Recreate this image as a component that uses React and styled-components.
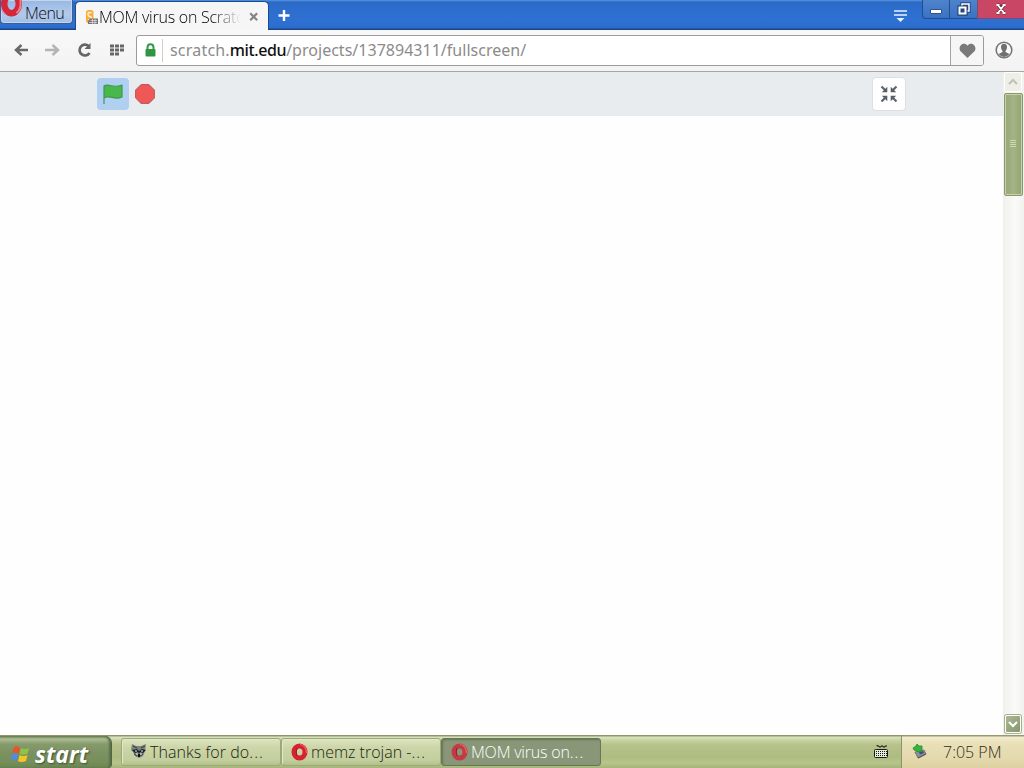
import React from 'react';
import styled, { createGlobalStyle } from 'styled-components';

const GlobalStyle = createGlobalStyle`
  * {
    box-sizing: border-box;
  }

  body {
    margin: 0;
    overflow: hidden;
    font-family: 'Open Sans', 'Noto Sans', sans-serif;
    background: #fff;
  }

  svg {
    display: block;
    flex-shrink: 0;
  }

  button {
    font-family: inherit;
    padding: 0;
    margin: 0;
  }
`;

const Screen = styled.div`
  width: 1024px;
  height: 768px;
  display: flex;
  flex-direction: column;
  overflow: hidden;
`;

const TitleBar = styled.header`
  height: 30px;
  display: flex;
  align-items: flex-start;
  background: linear-gradient(#5796e4 0, #2c69c4 2px, #2c6dce 10px, #2f71d2 20px, #2b6ccc 28px, #1c4486 29px);
`;

const MenuButton = styled.button`
  width: 73px;
  height: 24px;
  display: flex;
  align-items: flex-start;
  border: 1px solid #3c5f97;
  border-top: none;
  border-radius: 0 0 4px 4px;
  background: linear-gradient(#96b7e4, #b3c9e8 60%, #a3bfe6);
  box-shadow: inset 0 0 0 1px #c3d5ee;
  overflow: hidden;
`;

const MenuText = styled.span`
  font-size: 16px;
  font-weight: 300;
  line-height: 26px;
  letter-spacing: -0.6px;
  color: #050d1c;
  margin-left: 2px;
`;

const Tab = styled.div`
  width: 194px;
  height: 29px;
  margin: 1px 0 0 2px;
  padding: 1px 9px 0 9px;
  display: flex;
  align-items: center;
  border: 1px solid #1c4a91;
  border-bottom: none;
  border-radius: 5px 5px 0 0;
  background: #f6f6f6;
`;

const TabTitle = styled.span`
  width: 142px;
  margin: 0 auto 0 1px;
  overflow: hidden;
  white-space: nowrap;
  font-size: 16px;
  font-weight: 300;
  line-height: 26px;
  letter-spacing: -0.25px;
  color: #000;
  mask-image: linear-gradient(90deg, #000 112px, transparent 142px);
`;

const NewTab = styled.div`
  margin: 10px 0 0 9px;
`;

const WindowControls = styled.div`
  display: flex;
  align-items: flex-start;
  margin-left: auto;
`;

const TabMenu = styled.div`
  margin: 10px 15px 0 0;
`;

const WindowButton = styled.button`
  width: ${props => props.wide ? '47px' : props.first ? '27px' : '28px'};
  height: 19px;
  display: flex;
  align-items: center;
  justify-content: center;
  border: 1px solid ${props => props.close ? '#7c4a78' : '#234d91'};
  border-width: 0 0 1px 1px;
  border-bottom-left-radius: ${props => props.first ? '4px' : '0'};
  background: ${props => props.close ? '#c94764' : 'linear-gradient(#4f84cc, #3a72c2)'};
`;

const Toolbar = styled.div`
  height: 42px;
  display: flex;
  align-items: center;
  padding: 0 11px 1px 13px;
  background: linear-gradient(#f8f8f8, #f3f3f3);
  border-bottom: 1px solid #a3a6a7;
`;

const NavIcons = styled.div`
  width: 123px;
  display: flex;
  gap: 14px;
`;

const AddressBar = styled.div`
  width: 848px;
  height: 31px;
  display: flex;
  align-items: center;
  border: 1px solid #9b9b9b;
  border-radius: 3px;
  background: #fff;
  overflow: hidden;
`;

const LockBox = styled.div`
  width: 26px;
  height: 23px;
  padding-left: 8px;
  display: flex;
  align-items: center;
  border-right: 1px solid #cecece;
`;

const Url = styled.div`
  flex: 1;
  padding-left: 7px;
  font-family: 'Noto Sans', sans-serif;
  font-size: 16px;
  line-height: 26px;
  letter-spacing: 0.02px;
  white-space: nowrap;
  color: #8b8b8b;
`;

const Host = styled.span`
  letter-spacing: 0.2px;
`;

const Domain = styled.span`
  color: #111;
  font-weight: 500;
  letter-spacing: -0.4px;
`;

const HeartButton = styled.button`
  width: 33px;
  height: 29px;
  display: flex;
  align-items: center;
  justify-content: center;
  border: none;
  border-left: 1px solid #a3a3a3;
  background: #f6f6f6;
`;

const Profile = styled.div`
  margin-left: 11px;
`;

const Viewport = styled.main`
  flex: 1;
  min-height: 0;
  display: flex;
`;

const Page = styled.div`
  flex: 1;
  background: #fefefe;
`;

const StageHeader = styled.div`
  height: 44px;
  display: flex;
  align-items: center;
  justify-content: space-between;
  padding: 0 97px;
  background: #e8ecef;
`;

const StageControls = styled.div`
  display: flex;
  align-items: center;
  gap: 6px;
`;

const FlagButton = styled.button`
  width: 32px;
  height: 32px;
  display: flex;
  align-items: center;
  justify-content: center;
  border: none;
  border-radius: 4px;
  background: #b0d0f1;
`;

const ShrinkButton = styled.button`
  width: 34px;
  height: 34px;
  display: flex;
  align-items: center;
  justify-content: center;
  border: 1px solid #dcdfe3;
  border-radius: 4px;
  background: #fff;
`;

const Scrollbar = styled.aside`
  width: 21px;
  padding-right: 1px;
  display: flex;
  flex-direction: column;
  align-items: center;
  background: linear-gradient(90deg, #f0f0eb, #fafaf8 60%, #f1f1ed);
`;

const ArrowBox = styled.div`
  width: ${props => props.active ? '16px' : '18px'};
  height: ${props => props.active ? '18px' : '20px'};
  display: flex;
  align-items: center;
  justify-content: center;
  border: 1px solid #fff;
  border-radius: 2px;
  background: ${props => props.active ? 'linear-gradient(135deg, #adb893, #869571)' : '#efefe8'};
  box-shadow: 0 0 0 ${props => props.active ? '1px #a5b18b' : '0 transparent'};
  margin: ${props => props.active ? 'auto 0 2px' : '0 0 1px'};
`;

const Thumb = styled.div`
  width: 19px;
  height: 103px;
  padding-bottom: 3px;
  display: flex;
  flex-direction: column;
  align-items: center;
  justify-content: center;
  gap: 1px;
  border: 1px solid #899969;
  border-radius: 2px;
  background: linear-gradient(90deg, #97a777, #a4b485 50%, #93a471);
  box-shadow: inset 0 0 0 1px #c6d1ad;
`;

const Grip = styled.div`
  width: 6px;
  height: 1px;
  background: #ccd7b5;
`;

const Taskbar = styled.footer`
  height: 33px;
  display: flex;
  align-items: stretch;
  background: linear-gradient(#87976b 0, #8b9b6e 1px, #dce4c0 2px, #c9d4a3 5px, #b5c28a 10px, #aebc82 22px, #b7c58c 28px, #a5b479 33px);
`;

const StartButton = styled.button`
  width: 112px;
  margin: 1px 9px 0 0;
  padding: 4px 0 0 11px;
  display: flex;
  align-items: center;
  border: none;
  border-right: 1px solid #536344;
  border-radius: 0 7px 4px 0;
  background: linear-gradient(#6a7f50 0, #adbc94 3px, #869b6c 8px, #7a9060 18px, #759059 26px, #6b8552 32px);
  box-shadow: inset -2px 0 2px #58714a;
`;

const StartText = styled.span`
  margin-left: 5px;
  font-size: 23px;
  line-height: 28px;
  font-weight: 700;
  font-style: italic;
  letter-spacing: 0;
  color: #fff;
  text-shadow: 1px 1px 2px #3f5032;
`;

const Task = styled.button`
  width: 160px;
  height: 28px;
  margin: 3px 0 0 0;
  padding-left: 9px;
  display: flex;
  align-items: center;
  gap: 3px;
  border: 1px solid ${props => props.active ? '#68765a' : '#9ba87a'};
  border-radius: 3px;
  background: ${props => props.active ? '#899678' : 'linear-gradient(#dce4bf, #cbd5a7 35%, #c3cf9e 80%, #b4c18c)'};
  box-shadow: ${props => props.active ? 'inset 1px 1px 2px #687658' : 'inset 1px 1px 0 #e2e9ca'};
  color: ${props => props.active ? '#fff' : '#20250f'};
  font-size: 16px;
  font-weight: 300;
  line-height: 26px;
  letter-spacing: ${props => props.spacing};
  white-space: nowrap;
`;

const Dots = styled.span`
  letter-spacing: 1.1px;
`;

const Keyboard = styled.div`
  margin: 9px 13px 0 auto;
`;

const Tray = styled.div`
  width: 123px;
  display: flex;
  align-items: center;
  padding: 0 0 0 10px;
  border-left: 1px solid #87976b;
  background: linear-gradient(#99976d 0, #9b996e 1px, #f1edcf 2px, #e9e0b8 8px, #e4d9ad 24px, #ddd1a1 33px);
`;

const Clock = styled.span`
  margin-left: 15px;
  font-size: 16px;
  font-weight: 300;
  letter-spacing: 0;
  line-height: 28px;
  white-space: nowrap;
  color: #2f2a17;
`;

const OperaIcon = ({ dim }) => (
  <svg width="17" height="18" viewBox="0 0 17 18">
    <ellipse cx="8.5" cy="9" rx="5.5" ry="6" fill="none" stroke={dim ? '#c43a44' : '#d8222f'} strokeWidth="5" />
    <path d="M9 1.500Q15.500 2.500 15.300 10" fill="none" stroke="#ea6668" strokeWidth="1.2" />
    <path d="M6 5q-1.500 4 0 8" fill="none" stroke="#961c29" strokeWidth="1" />
  </svg>
);

function NavigationIcons() {
  return (
    <NavIcons>
      <svg width="17" height="18" viewBox="0 0 17 18">
        <path d="M15 9H4M8.5 4L3 9l5.5 5" fill="none" stroke="#696969" strokeWidth="2.5" />
      </svg>
      <svg width="17" height="18" viewBox="0 0 17 18">
        <path d="M1 9h12M8.5 4L14 9l-5.5 5" fill="none" stroke="#b4b4b4" strokeWidth="2.5" />
      </svg>
      <svg width="19" height="18" viewBox="0 0 19 18">
        <path d="M14.5 12A5.4 5.4 0 1 1 13.5 5" fill="none" stroke="#666" strokeWidth="2.7" />
        <path d="M15.5 2v6h-6z" fill="#666" />
      </svg>
      <svg width="17" height="18" viewBox="0 0 17 18">
        {[4, 8, 12].map(y => [2, 7, 12].map(x => (
          (y < 12 || x < 12) && <rect key={`${x}-${y}`} x={x} y={y - 0.5} width="4" height="3" fill="#666" />
        )))}
      </svg>
    </NavIcons>
  );
}

function Browser() {
  return (
    <>
      <TitleBar>
        <MenuButton>
          <svg width="22" height="18" viewBox="0 0 22 18">
            <ellipse cx="10.5" cy="4" rx="7.3" ry="9.2" fill="none" stroke="#d4283a" strokeWidth="6.500" />
            <path d="M19.500 0v6q-1 5-4 7" fill="none" stroke="#e9808a" strokeWidth="2" />
            <path d="M0 9q2 4 5 6" fill="none" stroke="#cf9fb8" strokeWidth="1.5" />
          </svg>
          <MenuText>Menu</MenuText>
        </MenuButton>
        <Tab>
          <svg width="13" height="16" viewBox="0 0 13 16">
            <rect x="1" y="1" width="7.500" height="13" rx="2.500" fill="#f8ad3d" />
            <path d="M6.500 4Q3 2.500 3 5t3 3q1.500 3.500-3 3" fill="none" stroke="#fff0cf" strokeWidth="1.4" />
            <path d="M5 9.500h8v5.500H3v-3z" fill="#757575" />
            <path d="M5.500 11.500H12M4 13.500h8M7.500 10v5M10 10v5" stroke="#f1f1f1" strokeWidth=".6" />
          </svg>
          <TabTitle>MOM virus on Scratch</TabTitle>
          <svg width="10" height="10" viewBox="0 0 10 10">
            <path d="M1.2 1.2l7 7m0-7l-7 7" stroke="#858585" strokeWidth="2.2" />
          </svg>
        </Tab>
        <NewTab>
          <svg width="12" height="12" viewBox="0 0 12 12">
            <path d="M6 0v11M.5 5.5h11" stroke="#fff" strokeWidth="2.4" />
          </svg>
        </NewTab>
        <WindowControls>
          <TabMenu>
            <svg width="13" height="13" viewBox="0 0 13 13">
              <path d="M0 1h13M0 5h13" stroke="#e9f2ff" strokeWidth="1.6" />
              <path d="M2.5 8h8l-4 4z" fill="#e9f2ff" />
            </svg>
          </TabMenu>
          <WindowButton first>
            <svg width="12" height="14" viewBox="0 0 12 14">
              <path d="M.5 7.500h11v4H.5z" fill="#fff" stroke="#31538a" />
            </svg>
          </WindowButton>
          <WindowButton>
            <svg width="14" height="14" viewBox="0 0 14 14">
              <path d="M5 3.500V2h7v7h-1.500M2 5h7v7H2z" fill="none" stroke="#27477e" strokeWidth="3.400" />
              <path d="M5 3.500V2h7v7h-1.500" fill="none" stroke="#fff" strokeWidth="1.5" />
              <path d="M2.500 5.500h6v6h-6z" fill="#27477e" stroke="#fff" strokeWidth="2" />
            </svg>
          </WindowButton>
          <WindowButton wide close>
            <svg width="12" height="12" viewBox="0 0 12 12">
              <path d="M2 2h2l2 2.5L8 2h2M3 2l6 8M9 2l-6 8M1.5 10h3M7.5 10h3" fill="none" stroke="#682b42" strokeWidth="3" />
              <path d="M1.5 2h3M7.5 2h3M3 2l6 8M9 2l-6 8M1.5 10h3M7.5 10h3" fill="none" stroke="#fff" strokeWidth="1.8" />
            </svg>
          </WindowButton>
        </WindowControls>
      </TitleBar>
      <Toolbar>
        <NavigationIcons />
        <AddressBar>
          <LockBox>
            <svg width="11" height="15" viewBox="0 0 11 15">
              <path d="M2.5 7V4.5C2.5 0 8.5 0 8.5 4.5V7" fill="none" stroke="#329944" strokeWidth="2" />
              <rect x=".5" y="6" width="10" height="7.500" rx="1" fill="#2f9541" />
            </svg>
          </LockBox>
          <Url><Host>scratch.</Host><Domain>mit.edu</Domain>/projects/137894311/fullscreen/</Url>
          <HeartButton>
            <svg width="17" height="15" viewBox="0 0 16 14">
              <path d="M8 14L1.200 7.500C-1.500 3 4.500-2 8 2.500C11.500-2 17.500 3 14.800 7.500z" fill="#7a7a7a" />
            </svg>
          </HeartButton>
        </AddressBar>
        <Profile>
          <svg width="18" height="18" viewBox="0 0 18 18">
            <circle cx="9" cy="9" r="7.8" fill="#fafafa" stroke="#777" strokeWidth="1.6" />
            <path d="M6 6.500C5.500 1.500 12.500 1.500 12 6.500q-.2 2-1.500 3.500v1l4 2q-5.500 6-11 0l4-2v-1Q6.200 8.500 6 6.500z" fill="#707070" />
          </svg>
        </Profile>
      </Toolbar>
    </>
  );
}

function App() {
  return (
    <Screen>
      <GlobalStyle />
      <Browser />
      <Viewport>
        <Page>
          <StageHeader>
            <StageControls>
              <FlagButton>
                <svg width="22" height="22" viewBox="0 0 22 22">
                  <path d="M2 21V3C7-.5 10 6 20 2v12C12 18 8 11 2 15" fill="#46b84c" stroke="#439651" strokeWidth="1.2" strokeLinejoin="round" />
                </svg>
              </FlagButton>
              <svg width="20" height="20" viewBox="0 0 20 20">
                <path d="M6 .6h8L19.400 6v8L14 19.400H6L.6 14V6z" fill="#ee5958" stroke="#bc5558" strokeWidth="1" />
              </svg>
            </StageControls>
            <ShrinkButton>
              <svg width="18" height="18" viewBox="0 0 18 18">
                <path d="M1.500 1.500l4 4M16.500 1.500l-4 4M1.500 16.500l4-4M16.500 16.500l-4-4" stroke="#5d646c" strokeWidth="2.200" />
                <path d="M7.300 1.800v5.500H1.800zM10.700 1.800v5.500h5.500zM1.800 10.700h5.500v5.500zM10.700 10.700h5.500l-5.500 5.500z" fill="#575e66" />
              </svg>
            </ShrinkButton>
          </StageHeader>
        </Page>
        <Scrollbar>
          <ArrowBox>
            <svg width="10" height="8" viewBox="0 0 10 8">
              <path d="M1 6l4-4 4 4" fill="none" stroke="#c2c1b6" strokeWidth="2" />
            </svg>
          </ArrowBox>
          <Thumb>
            <Grip /><Grip /><Grip /><Grip />
          </Thumb>
          <ArrowBox active>
            <svg width="10" height="8" viewBox="0 0 10 8">
              <path d="M1 2l4 4 4-4" fill="none" stroke="#fff" strokeWidth="2" />
            </svg>
          </ArrowBox>
        </Scrollbar>
      </Viewport>
      <Taskbar>
        <StartButton>
          <svg width="19" height="19" viewBox="0 0 19 19">
            <path d="M3 2q4-2 6 1L7.500 9Q5 6.500 1 8.500z" fill="#e85328" />
            <path d="M10 3q4 2 8-.3l-1.500 6q-4 2-8 .3z" fill="#8fc443" />
            <path d="M1 9.500q4-2 6 .5l-1.500 6Q3 13.500 0 15z" fill="#4f8de0" />
            <path d="M8.500 10q4 2 8 0L15 16q-4 2-8 .3z" fill="#f2c529" />
          </svg>
          <StartText>start</StartText>
        </StartButton>
        <Task spacing="0.05px">
          <svg width="16" height="18" viewBox="0 0 16 18">
            <path d="M1 1l4 2h5l5-2-1 7-2 5-4 2-4-2-2-4L0 7z" fill="#79837b" />
            <path d="M1 7l5-1 2 2 3-2 4 1-3 3-3-1-1 2-1-2-3 1z" fill="#1b2529" />
            <path d="M2 3l4 2M14 3l-4 2M3 11l3 2M12 11l-3 2" stroke="#333d3d" />
            <path d="M4 8h2M10 8h2M5 11h2M9 11h2" stroke="#e4e9df" />
            <path d="M7 11h2v3H7z" fill="#0e1518" />
          </svg>
          <span>Thanks for do<Dots>...</Dots></span>
        </Task>
        <Task spacing="0">
          <OperaIcon />
          <span>memz trojan -<Dots>...</Dots></span>
        </Task>
        <Task active spacing="-0.2px">
          <OperaIcon dim />
          <span>MOM virus on<Dots>...</Dots></span>
        </Task>
        <Keyboard>
          <svg width="14" height="15" viewBox="0 0 14 15">
            <path d="M3 1v1h2v1h2V2h2v1h2V2h2" fill="none" stroke="#161b0d" />
            <rect x=".5" y="5.500" width="13" height="8" rx="1" fill="#e7ebdf" stroke="#161b0d" />
            <path d="M2 7.500h11M2 9.500h11M2 11.500h11" stroke="#161b0d" strokeDasharray="1 1" />
          </svg>
        </Keyboard>
        <Tray>
          <svg width="16" height="17" viewBox="0 0 16 17">
            <path d="M3 9l9-2 2 4-8 4z" fill="#8990a0" stroke="#77776b" />
            <path d="M7 9l4-1 1 2-4 1.500z" fill="#3e4e85" />
            <path d="M1 5l3-2 1-2 2 2h3v4l-3 2-2-1-3-1z" fill="#31b735" stroke="#2b8c30" strokeWidth=".8" />
            <path d="M6 15l8-4" stroke="#5b5d50" strokeWidth="1.2" />
          </svg>
          <Clock>7:05 PM</Clock>
        </Tray>
      </Taskbar>
    </Screen>
  );
}

export default App;
